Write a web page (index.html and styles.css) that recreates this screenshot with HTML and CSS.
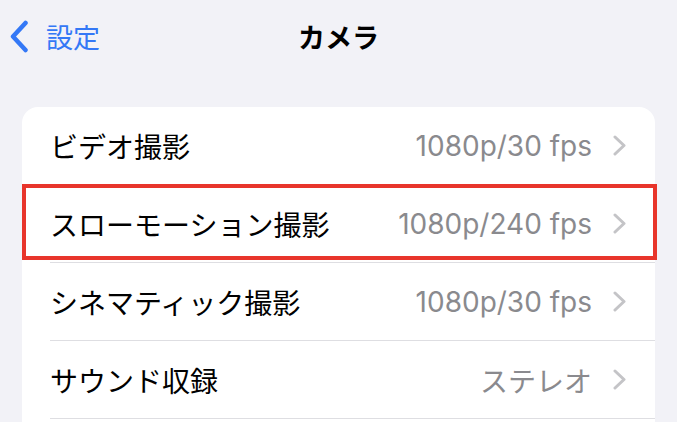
FILE: index.html
```html
<html>
<head>
    <title>カメラ</title>
    <meta charset="utf-8">
    <link rel="stylesheet" href="styles.css">
</head>
<body>

    <div class="navBar">
        <a class="back" href="javascript:;">
            <svg class="backIcon" width="20" height="33" viewBox="0 0 20 33">
                <polyline points="16.5,3 4,16.5 16.5,30" />
            </svg>
            <span>設定</span>
        </a>
        <div class="title">カメラ</div>
        <div></div>
    </div>

    <div class="list">
        <div class="row">
            <div class="label">ビデオ撮影</div>
            <div class="value">1080p/30 fps</div>
            <svg class="chevron" width="13" height="21" viewBox="0 0 13 21"><polyline points="2,2 11,10.5 2,19" /></svg>
        </div>
        <div class="row marked">
            <div class="label">スローモーション撮影</div>
            <div class="value">1080p/240 fps</div>
            <svg class="chevron" width="13" height="21" viewBox="0 0 13 21"><polyline points="2,2 11,10.5 2,19" /></svg>
        </div>
        <div class="row">
            <div class="label">シネマティック撮影</div>
            <div class="value">1080p/30 fps</div>
            <svg class="chevron" width="13" height="21" viewBox="0 0 13 21"><polyline points="2,2 11,10.5 2,19" /></svg>
        </div>
        <div class="row">
            <div class="label">サウンド収録</div>
            <div class="value">ステレオ</div>
            <svg class="chevron" width="13" height="21" viewBox="0 0 13 21"><polyline points="2,2 11,10.5 2,19" /></svg>
        </div>
    </div>

</body>
</html>
```

FILE: styles.css
```css
* {font-family: Inter, "Noto Sans CJK JP", sans-serif;}
body {margin: 0; background-color: #f2f2f7; overflow: hidden;}

.navBar {
    display: grid;
    grid-template-columns: 1fr auto 1fr;
    align-items: center;
    height: 72px;
    padding-left: 9px;
}
.back {
    display: flex;
    align-items: center;
    gap: 17px;
    color: #3478f6;
    font-size: 27px;
    text-decoration: none;
}
.backIcon polyline {
    fill: none;
    stroke: #3478f6;
    stroke-width: 4.5;
    stroke-linecap: round;
    stroke-linejoin: round;
}
.title {
    font-size: 27px;
    font-weight: 700;
    color: #000;
    margin-right: 9px;
}

.list {
    background-color: #fff;
    border-radius: 16px 16px 0 0;
    margin: 35px 22px 0;
    padding-bottom: 3px;
}
.row {
    display: flex;
    align-items: center;
    height: 77px;
    margin-left: 28px;
    padding-right: 29px;
    border-bottom: 1px solid #dedee2;
    position: relative;
}
.row .label {
    flex: 1;
    font-size: 28px;
    color: #000;
}
.row .value {
    font-size: 28px;
    color: #8a8a8e;
    margin-right: 21px;
}
.chevron polyline {
    fill: none;
    stroke: #c4c4c7;
    stroke-width: 3;
    stroke-linecap: round;
    stroke-linejoin: round;
}
.marked::after {
    content: "";
    position: absolute;
    top: -1px;
    bottom: 2px;
    left: -28px;
    right: -2px;
    border: 4px solid #e8352b;
}
```
